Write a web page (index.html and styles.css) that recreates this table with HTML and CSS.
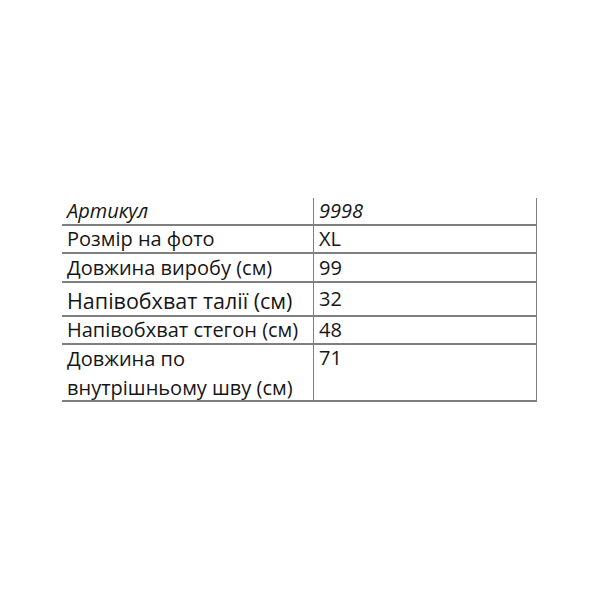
FILE: index.html
```html
<!DOCTYPE html>
<html lang="uk">
<head>
<meta charset="utf-8">
<link rel="stylesheet" href="styles.css">
</head>
<body>
<div class="page">
  <div class="specs">
    <div class="row r1"><div class="name it">Артикул</div><div class="val it">9998</div></div>
    <div class="row r2"><div class="name">Розмір на фото</div><div class="val">XL</div></div>
    <div class="row r3"><div class="name">Довжина виробу (см)</div><div class="val">99</div></div>
    <div class="row r4"><div class="name light">Напівобхват талії (см)</div><div class="val">32</div></div>
    <div class="row r5"><div class="name">Напівобхват стегон (см)</div><div class="val">48</div></div>
    <div class="row r6"><div class="name"><span class="two">Довжина по<br>внутрішньому шву (см)</span></div><div class="val">71</div></div>
  </div>
</div>
</body>
</html>
```
FILE: styles.css
```css
html, body {
  margin: 0;
  padding: 0;
  background: #ffffff;
}
.page {
  width: 600px;
  height: 600px;
  padding-top: 198px;
  padding-left: 62px;
  box-sizing: border-box;
}
.specs {
  width: 475px;
  font-family: "Open Sans", "Liberation Sans", sans-serif;
  font-size: 20px;
  font-weight: 500;
  color: #161616;
}
.row {
  display: grid;
  grid-template-columns: 251px 224px;
  grid-template-rows: minmax(0, 1fr);
  box-sizing: border-box;
  border-bottom: 2px solid #7f7f7f;
}
.name, .val {
  padding-left: 5px;
  padding-top: 1px;
  line-height: 24px;
  white-space: nowrap;
}
.val {
  border-left: 1.5px solid #7f7f7f;
  border-right: 1.5px solid #7f7f7f;
  margin-bottom: -2px;
}
.it { font-style: italic; }
.light { font-size: 21.5px; font-weight: 400; line-height: 30px; padding-top: 3px; }
.r1 { height: 28px; }
.r2 { height: 28px; }
.r3 { height: 29px; }
.r3 .name, .r3 .val { padding-top: 2px; }
.r4 { height: 34px; }
.r4 .val { padding-top: 4px; }
.r5 { height: 28px; }
.r6 { height: 57px; }
.two { display: block; line-height: 29px; margin-top: -2px; }
```
